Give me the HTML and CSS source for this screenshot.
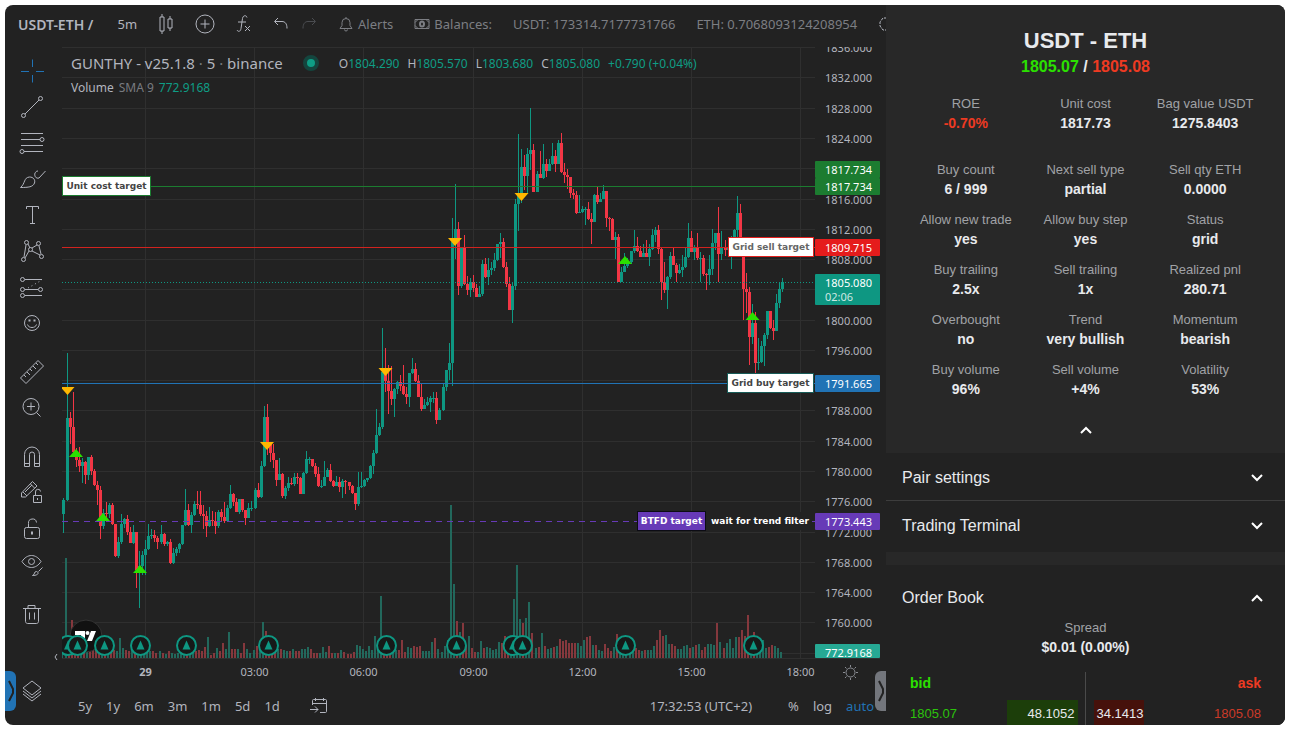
FILE: index.html
```html
<!DOCTYPE html>
<html lang="en">
<head>
  <meta charset="UTF-8" />
  <meta name="viewport" content="width=device-width, initial-scale=1.0"/>
  <title>USDT-ETH</title>
  <link rel="stylesheet" href="styles.css">
</head>
<body>
  <div class="app">
    <main class="terminal">
      <header class="topbar">
        <button class="pair">USDT-ETH /</button>
        <button>5m</button>
        <button aria-label="Candles"><svg width="16" height="22" viewBox="0 0 16 22"><path d="M4 1v3M4 18v3M12 3v3M12 15v3M2 4h4v14H2zM10 6h4v9h-4z"/></svg></button>
        <button aria-label="Compare"><svg width="20" height="20" viewBox="0 0 20 20"><circle cx="10" cy="10" r="9"/><path d="M10 5.500v9M5.500 10h9"/></svg></button>
        <button aria-label="Indicators"><svg width="16" height="20" viewBox="0 0 16 20"><path d="M11 3.500C10.500 1 7 1 6.500 4.500L5 14.500C4.500 18 2 18 1 16M2 8h8M9 12l5 5M14 12l-5 5"/></svg></button>
        <button aria-label="Undo"><svg width="16" height="14" viewBox="0 0 16 14"><path d="M5 1 1.500 4.500 5 8M2 4.500h7c3 0 5 2 5 7"/></svg></button>
        <button class="redo" aria-label="Redo"><svg width="16" height="14" viewBox="0 0 16 14"><path d="M11 1l3.500 3.500L11 8M14 4.500H7c-3 0-5 2-5 7"/></svg></button>
        <button class="dim"><svg width="16" height="16" viewBox="0 0 16 16"><path d="M2 12.500h12l-2-3V6.500a4 4 0 0 0-8 0v3zM6.500 13.500a1.500 1.500 0 0 0 3 0M8 1v1.500"/></svg>Alerts</button>
        <button class="dim"><svg width="16" height="12" viewBox="0 0 16 12"><path d="M1 1.500h14v9H1zM4 1.500 1 4.500M12 1.500 15 4.500M1 7.500l3 3M15 7.500l-3 3"/><ellipse cx="8" cy="6" rx="2" ry="2.500" stroke-width="2"/></svg>Balances:</button>
        <span class="dim">USDT: 173314.7177731766</span>
        <span class="dim">ETH: 0.7068093124208954</span>
        <button aria-label="Settings"><svg width="18" height="18" viewBox="0 0 18 18"><path d="M5 3 2 7v4l3 4h8l3-4V7l-3-4z" stroke-dasharray="3 1"/></svg></button>
      </header>

      <nav class="tools">
        <button class="active" aria-label="Cross"><svg viewBox="0 0 28 28"><path d="M14.500 2.500V10M14.500 18v7.500M3 14.500h8M18 14.500h8"/></svg></button>
        <button aria-label="Trend line"><svg viewBox="0 0 28 28"><circle cx="5.500" cy="22.500" r="2"/><circle cx="22.500" cy="5.500" r="2"/><path d="M7 21 21 7"/></svg></button>
        <button aria-label="Fib retracement"><svg viewBox="0 0 28 28"><path d="M3 4.500h22M3 10.500h19M3 16.500h22M6 22.500h19"/><circle cx="24" cy="10.500" r="2"/><circle cx="4" cy="22.500" r="2"/></svg></button>
        <button aria-label="Brush"><svg viewBox="0 0 28 28"><path d="M2.500 22.500c5-4 3-10 9-10.500 4 0 6 3 5 6-1.500 4-6 4.500-14 4.500zM17 8c-1 3 1 6 4 5l6.500-7M17 8c1-1 1-2 3-2"/></svg></button>
        <button aria-label="Text"><svg viewBox="0 0 28 28"><path d="M8.500 8V5.500h12V8M14.500 5.500v17M12 22.500h5"/></svg></button>
        <button aria-label="Patterns"><svg viewBox="0 0 28 28"><circle cx="8.500" cy="5.500" r="2"/><circle cx="20.500" cy="6.500" r="2"/><circle cx="12.500" cy="12.500" r="2"/><circle cx="5.500" cy="22.500" r="2"/><circle cx="23.500" cy="19.500" r="2"/><path d="m8 8-2 12M10 7l2 4M19 8l-5 3M14 14l8 4M21 9l2 8M11 14l-4 7"/></svg></button>
        <button aria-label="Forecast"><svg viewBox="0 0 28 28"><circle cx="4.500" cy="6.500" r="2"/><circle cx="4.500" cy="16.500" r="2"/><circle cx="22.500" cy="16.500" r="2"/><circle cx="4.500" cy="22.500" r="2"/><path d="M7 6.500h17M7 16.500h13M7 22.500h17"/><path d="m10 15 14-8" stroke-dasharray="1 3"/></svg></button>
        <button aria-label="Emoji"><svg viewBox="0 0 28 28"><circle cx="14" cy="14" r="7.500"/><path d="M9.500 15.500c1 4 8 4 9 0"/><path d="M11.500 10.500v2M16.500 10.500v2" stroke-width="2"/></svg></button>
        <button class="gap" aria-label="Measure"><svg viewBox="0 0 28 28"><path d="M2.500 20 20 2.500l5.500 5.500L8 25.500zM6 17l2 2M9 14l3 3M12 11l2 2M15 8l3 3M18 5l2 2"/></svg></button>
        <button aria-label="Zoom in"><svg viewBox="0 0 28 28"><circle cx="13" cy="12.500" r="8"/><path d="M13 8.500v8M9 12.500h8M18.500 18.500l4 4"/></svg></button>
        <button class="gap" aria-label="Magnet"><svg viewBox="0 0 28 28"><path d="M6.500 23.500v-12a7.500 7.500 0 0 1 15 0v12h-5v-12a2.500 2.500 0 0 0-5 0v12zM6.500 20.500h5M16.500 20.500h5"/></svg></button>
        <button aria-label="Stay in drawing mode"><svg viewBox="0 0 28 28"><path d="M3.500 18v-4L14.500 2.500l4.500 4.500L7.500 18zM5 13l4 4M12.500 5l4 4M7 13l7-7M15.500 16.500h8v7h-8zM17.500 16v-3a2.500 2.500 0 0 1 5-.5M19.500 19v2"/></svg></button>
        <button aria-label="Lock"><svg viewBox="0 0 28 28"><rect x="6.500" y="12.500" width="15" height="11" rx="2"/><path d="M10.500 12V8.500a4 4 0 0 1 8-1"/><path d="M14 16.500v3" stroke-width="2"/></svg></button>
        <button aria-label="Hide"><svg viewBox="0 0 28 28"><path d="M4 10.500c5-8 14-8 19 0-5 8-14 8-19 0z"/><circle cx="13.500" cy="10.500" r="3"/><path d="M14.500 24.500c3-1 1-4 4-4 3 1 2 4-4 4zM20.500 20.500l4-4"/></svg></button>
        <button class="gap" aria-label="Remove"><svg viewBox="0 0 28 28"><path d="M5 8.500h18M10 8V5.500h7V8M7.500 9v12.500c0 1 1 2 2 2h9c1 0 2-1 2-2V9M11.500 12.500v7M16.500 12.500v7"/></svg></button>
        <button class="layers" aria-label="Object tree"><svg viewBox="0 0 28 28"><path d="m14 4 9 7-9 7-9-7zM5 14l9 7 9-7M5 17l9 7 9-7"/></svg></button>
      </nav>

      <section class="chart">
        <div class="legend">
          <div class="legend-row">
            <span class="legend-title">GUNTHY - v25.1.8 <i>·</i> 5 <i>·</i> binance</span>
            <span class="status"></span>
            <span class="ohlc">O<b>1804.290</b></span>
            <span class="ohlc">H<b>1805.570</b></span>
            <span class="ohlc">L<b>1803.680</b></span>
            <span class="ohlc">C<b>1805.080</b></span>
            <span class="ohlc"><b>+0.790 (+0.04%)</b></span>
          </div>
          <div class="legend-row volume">Volume <i>SMA 9</i> <b>772.9168</b></div>
        </div>
        <svg id="plot" viewBox="62 47 818 640" preserveAspectRatio="xMaxYMin meet"></svg>
      </section>

      <footer class="ranges">
        <button>5y</button>
        <button>1y</button>
        <button>6m</button>
        <button>3m</button>
        <button>1m</button>
        <button>5d</button>
        <button>1d</button>
        <button class="goto" aria-label="Go to date"><svg width="18" height="18" viewBox="0 0 18 18"><path d="M2.500 8V3.500c0-.6.400-1 1-1h12c.6 0 1 .4 1 1v11c0 .6-.4 1-1 1H10M2.500 6.500h14M5.500 1v3M13.500 1v3M0 12.500h8M5 9.500l3 3-3 3"/></svg></button>
        <span class="clock">17:32:53 (UTC+2)</span>
        <button class="scale">%</button>
        <button>log</button>
        <button class="auto">auto</button>
      </footer>
      <button class="handle handle-left" aria-label="Open left panel"><svg width="8" height="24" viewBox="0 0 8 24"><path d="M2 2l4 8v4l-4 8"/></svg></button>
      <button class="handle handle-right" aria-label="Close right panel"><svg width="8" height="24" viewBox="0 0 8 24"><path d="M2 2l4 8v4l-4 8"/></svg></button>
      <button class="scroll-back" aria-label="Scroll back"><svg width="4" height="8" viewBox="0 0 4 8"><path d="M3 1 1 4l2 3"/></svg></button>
    </main>

    <aside class="side">
      <section class="summary">
        <h1>USDT - ETH</h1>
        <p class="quote"><span class="up">1805.07</span> / <span class="down">1805.08</span></p>
        <dl class="stats first">
          <div><dt>ROE</dt><dd class="down">-0.70%</dd></div>
          <div><dt>Unit cost</dt><dd>1817.73</dd></div>
          <div><dt>Bag value USDT</dt><dd>1275.8403</dd></div>
        </dl>
        <dl class="stats">
          <div><dt>Buy count</dt><dd>6 / 999</dd></div>
          <div><dt>Next sell type</dt><dd>partial</dd></div>
          <div><dt>Sell qty ETH</dt><dd>0.0000</dd></div>
          <div><dt>Allow new trade</dt><dd>yes</dd></div>
          <div><dt>Allow buy step</dt><dd>yes</dd></div>
          <div><dt>Status</dt><dd>grid</dd></div>
          <div><dt>Buy trailing</dt><dd>2.5x</dd></div>
          <div><dt>Sell trailing</dt><dd>1x</dd></div>
          <div><dt>Realized pnl</dt><dd>280.71</dd></div>
          <div><dt>Overbought</dt><dd>no</dd></div>
          <div><dt>Trend</dt><dd>very bullish</dd></div>
          <div><dt>Momentum</dt><dd>bearish</dd></div>
          <div><dt>Buy volume</dt><dd>96%</dd></div>
          <div><dt>Sell volume</dt><dd>+4%</dd></div>
          <div><dt>Volatility</dt><dd>53%</dd></div>
        </dl>
        <button class="collapse" aria-label="Collapse"><svg class="chevron" viewBox="0 0 12 8"><path d="M1 7l5-5 5 5"/></svg></button>
      </section>

      <button class="panel-head">Pair settings<svg class="chevron" viewBox="0 0 12 8"><path d="M1 1l5 5 5-5"/></svg></button>
      <button class="panel-head terminal-head">Trading Terminal<svg class="chevron" viewBox="0 0 12 8"><path d="M1 1l5 5 5-5"/></svg></button>

      <section class="book">
        <button class="panel-head book-head">Order Book<svg class="chevron" viewBox="0 0 12 8"><path d="M1 7l5-5 5 5"/></svg></button>
        <dl class="spread"><dt>Spread</dt><dd>$0.01 (0.00%)</dd></dl>
        <div class="sides">
          <table class="bids">
            <tr><th class="up">bid</th><th></th></tr>
            <tr><td class="up">1805.07</td><td class="qty">48.1052</td></tr>
          </table>
          <table class="asks">
            <tr><th></th><th class="down">ask</th></tr>
            <tr><td class="qty">34.1413</td><td class="down">1805.08</td></tr>
          </table>
        </div>
      </section>
    </aside>
  </div>

  <script src="chart.js"></script>
</body>
</html>
```
FILE: styles.css
```css
* {
  box-sizing: border-box;
}

body {
  margin: 0;
  padding: 5px;
  background: #ffffff;
  font-family: "Liberation Sans", Arial, sans-serif;
}

button {
  display: flex;
  align-items: center;
  margin: 0;
  padding: 0;
  border: none;
  background: none;
  color: inherit;
  font: inherit;
  cursor: pointer;
}

svg {
  display: block;
  flex: none;
}

p, h1, dl, dd {
  margin: 0;
}

i {
  font-style: normal;
  color: #787b80;
}

.app {
  display: flex;
  height: calc(100vh - 10px);
  border-radius: 8px;
  overflow: hidden;
  background: #222222;
}

/* trading view */
.terminal {
  position: relative;
  flex: 1;
  min-width: 0;
  display: grid;
  grid-template-columns: 57px minmax(0, 1fr);
  grid-template-rows: 42px minmax(0, 1fr) 38px;
  color: #b2b5be;
  font-family: "Noto Sans", sans-serif;
  font-size: 13px;
  overflow: hidden;
}

.terminal button svg {
  fill: none;
  stroke: currentColor;
}

.topbar {
  grid-column: 1 / 3;
  display: flex;
  align-items: center;
  gap: 21px;
  padding: 0 0 4px 13px;
  white-space: nowrap;
  overflow: hidden;
}

.topbar button {
  flex: none;
  gap: 4px;
}

.topbar .pair {
  margin-right: 3px;
  font-size: 14px;
  font-weight: 600;
}

.topbar .redo {
  margin-left: -9px;
  color: #4a4c50;
}

.dim {
  color: #7c7e83;
}

.tools {
  grid-row: 2 / 4;
  display: flex;
  flex-direction: column;
  align-items: center;
  padding: 6px 3px 16px 0;
}

.tools button {
  height: 36px;
}

.tools svg {
  width: 28px;
  height: 28px;
}

.tools .gap {
  margin-top: 13px;
}

.tools .layers {
  margin-top: auto;
}

.active, .auto {
  color: #2173b5;
}

.chart {
  position: relative;
  padding-right: 6px;
}

#plot {
  width: 100%;
  height: 100%;
  overflow: hidden;
}

.legend {
  position: absolute;
  left: 9px;
  top: 4px;
}

.legend-row {
  display: flex;
  align-items: center;
  gap: 8px;
  height: 24px;
  font-size: 12px;
  white-space: nowrap;
}

.volume {
  gap: 5px;
}

.legend-row b {
  color: #0f9d85;
  font-weight: 400;
}

.legend-title {
  font-size: 15px;
}

.status {
  width: 16px;
  height: 16px;
  margin: 0 12px;
  border: 4px solid #14453e;
  border-radius: 50%;
  background: #0f9d85;
}

.ranges {
  grid-column: 2;
  display: flex;
  align-items: center;
  gap: 14px;
  padding: 0 12px 0 16px;
}

.goto {
  margin-left: 16px;
}

.clock {
  margin-left: auto;
}

.scale {
  margin-left: 22px;
}

.handle {
  position: absolute;
  bottom: 14px;
  width: 11px;
  height: 40px;
  justify-content: center;
  color: #222222;
}

.terminal .handle svg {
  stroke-width: 2;
}

.handle-left {
  left: 0;
  border-radius: 0 6px 6px 0;
  background: #2173b5;
}

.handle-right {
  right: 0;
  border-radius: 6px 0 0 6px;
  background: #73767c;
}

.scroll-back {
  position: absolute;
  left: 49px;
  bottom: 64px;
}

/* chart drawing */
.grid {
  stroke: #2f2f2f;
}

.up-bar {
  fill: #0e9782;
}

.down-bar {
  fill: #f23645;
}

.up-volume {
  fill: #22685c;
}

.down-volume {
  fill: #85383d;
}

.sell {
  fill: #ffb700;
}

.buy {
  fill: #2be000;
}

.event {
  fill: #161a19;
  stroke: #0e9782;
  stroke-width: 2;
}

.axis {
  fill: #b2b5be;
  font-size: 11px;
}

.tag {
  fill: #ffffff;
  font-size: 11px;
}

.note {
  font-family: "DejaVu Sans", sans-serif;
  font-size: 9px;
  font-weight: 700;
}

.backdrop {
  fill: #222222;
}

.thin {
  fill: none;
  stroke: #8a8d93;
}

/* side panel */
.side {
  flex: 0 0 399px;
  background: #282828;
  color: #e8eaed;
  overflow: hidden;
}

.summary {
  display: flex;
  flex-direction: column;
  align-items: center;
  padding: 22px 20px 19px;
}

h1 {
  font-size: 22px;
  line-height: 28px;
}

.quote {
  font-size: 16px;
  font-weight: 700;
  line-height: 23px;
}

.up {
  color: #2be000;
}

.down {
  color: #ee3a22;
}

.stats {
  width: 100%;
  display: grid;
  grid-template-columns: repeat(3, 1fr);
  row-gap: 11px;
  text-align: center;
}

.stats.first {
  margin: 16px 0 27px;
}

dt {
  font-size: 13px;
  line-height: 20px;
  color: #a0a2a6;
}

dd {
  font-size: 14px;
  font-weight: 700;
  line-height: 19px;
}

.collapse {
  padding-top: 27px;
}

.chevron {
  width: 12px;
  height: 8px;
  fill: none;
  stroke: #ffffff;
  stroke-width: 2;
}

.panel-head {
  width: 100%;
  height: 47px;
  justify-content: space-between;
  padding: 3px 22px 0 16px;
  background: #222222;
  font-size: 16px;
}

.terminal-head {
  height: 52px;
  padding-bottom: 4px;
  border-top: 1px solid #3d3d3d;
}

.book {
  margin-top: 13px;
  padding-top: 9px;
  background: #222222;
}

.book-head {
  height: 44px;
}

.spread {
  text-align: center;
}

.sides {
  display: grid;
  grid-template-columns: 1fr 1fr;
  gap: 16px;
  margin-top: 15px;
  padding: 0 24px;
  background: linear-gradient(#4a4a4a, #4a4a4a) center / 1px 100% no-repeat;
}

table {
  border-collapse: collapse;
  font-size: 13px;
}

th {
  height: 22px;
  padding: 0;
  font-size: 14px;
  text-align: left;
}

td {
  height: 31px;
  padding: 8px 0 0;
}

td.up {
  color: #2cc30c;
}

td.down {
  color: #cc3a28;
}

.asks .down {
  text-align: right;
}

.bids .qty {
  width: 71px;
  padding-right: 3px;
  text-align: right;
  background: linear-gradient(#1c3e0a, #1c3e0a) bottom / 100% 25px no-repeat;
}

.asks .qty {
  width: 50px;
  padding-left: 3px;
  background: linear-gradient(#46110b, #46110b) left bottom / 50px 25px no-repeat;
}
```
FILE: chart.js
```js
const plot = document.getElementById("plot");
let out = "";

const priceY = p => 78.4 + (1832 - p) * 7.57;
const barX = i => Math.floor(67 + (i - 1) * 3.0323);

// [high, close, low] of every bar on the pixel scale, a bar opens at the last close
const bars = [
  [498,500,533],[353,418,501],[412,427,444],[392,452,455],[448,460,467],[447,466,472],[458,462,483],[461,475,484],
  [457,457,480],[455,471,475],[469,485,486],[481,490,505],[486,526,539],[509,513,529],[502,514,520],[503,505,518],
  [503,524,525],[524,556,557],[537,542,558],[514,524,544],[518,519,528],[515,532,535],[527,543,543],[525,532,544],
  [532,570,588],[551,566,608],[551,555,575],[540,549,575],[524,536,550],[529,535,539],[530,538,542],[536,542,549],
  [525,534,544],[533,544,546],[541,542,546],[539,563,564],[548,553,564],[547,549,556],[543,544,553],[525,525,545],
  [489,510,526],[504,525,526],[512,515,533],[501,504,516],[491,505,509],[491,514,516],[505,516,529],[511,526,537],
  [507,520,527],[511,521,526],[512,526,534],[510,512,528],[509,517,522],[502,521,523],[505,508,522],[485,494,509],
  [493,502,506],[498,512,512],[499,499,514],[499,510,512],[510,518,525],[503,508,518],[501,508,511],[488,490,509],
  [483,497,498],[461,466,498],[406,417,467],[404,443,455],[442,453,462],[444,460,468],[460,480,486],[458,474,480],
  [473,496,498],[486,488,499],[477,483,491],[478,484,485],[473,477,486],[473,478,484],[477,494,494],[472,473,494],
  [451,459,474],[457,459,464],[459,466,467],[463,474,477],[467,486,487],[480,486,488],[461,477,486],[468,470,477],
  [464,481,482],[480,486,487],[476,482,486],[477,487,492],[479,481,498],[480,482,494],[482,486,490],[485,493,494],
  [493,504,510],[472,487,506],[472,486,488],[479,480,487],[478,478,482],[465,466,479],[450,453,474],[409,435,454],
  [423,427,436],[328,372,429],[348,381,392],[365,391,414],[366,399,405],[388,389,417],[381,382,394],[375,386,391],
  [365,394,395],[387,397,404],[373,373,407],[358,369,374],[363,381,382],[375,397,397],[384,409,411],[399,405,409],
  [397,402,406],[396,398,412],[392,398,403],[392,420,424],[408,410,420],[384,387,411],[370,370,391],[343,363,380],
  [218,242,386],[184,229,259],[222,286,295],[247,247,288],[235,284,285],[276,290,295],[278,282,297],[275,288,292],
  [284,297,297],[286,294,297],[260,264,296],[258,277,278],[258,270,285],[262,268,275],[253,260,271],[244,244,261],
  [233,242,258],[238,267,268],[262,284,287],[277,310,310],[282,286,323],[199,204,290],[134,196,231],[149,167,203],
  [155,176,190],[148,154,193],[108,150,170],[144,192,192],[171,174,192],[151,178,178],[144,164,179],[159,171,177],
  [159,164,171],[143,156,165],[150,164,172],[140,143,164],[133,172,173],[163,175,183],[169,177,189],[177,193,198],
  [189,195,199],[191,213,214],[195,212,213],[206,209,213],[207,209,225],[202,219,220],[213,222,244],[194,195,222],
  [187,202,204],[193,199,202],[185,191,199],[191,218,227],[217,219,231],[218,240,240],[232,237,259],[234,282,282],
  [267,272,282],[253,266,272],[258,262,268],[251,251,264],[230,246,253],[237,251,252],[246,257,257],[244,253,257],
  [240,257,257],[244,249,266],[229,235,250],[227,230,242],[225,249,254],[247,282,300],[262,290,293],[276,277,309],
  [252,256,279],[247,265,265],[263,273,282],[264,270,274],[255,267,277],[248,257,268],[223,238,258],[231,252,252],
  [245,248,260],[233,258,260],[252,258,282],[255,274,276],[273,275,290],[255,269,285],[229,243,275],[233,233,250],
  [207,254,282],[231,247,260],[240,250,256],[240,247,256],[236,238,269],[229,230,250],[196,213,237],[204,240,245],
  [240,289,320],[273,292,313],[287,337,365],[304,323,344],[312,363,374],[338,362,370],[341,346,363],[333,335,366],
  [311,311,339],[311,328,329],[320,331,340],[294,303,331],[282,289,308],[278,282,292]
];

const volumes = [
  12,100,20,38,22,12,10,14,20,10,14,10,8,7,12,9,11,8,7,20,10,8,7,12,10,20,12,10,8,7,7,5,7,5,4,7,5,4,5,7,
  12,10,8,9,7,8,7,11,21,3,5,10,7,15,9,26,9,9,9,5,15,9,5,8,12,10,36,27,14,10,12,9,9,8,7,7,9,7,7,9,
  9,11,9,5,5,5,11,6,12,5,5,5,8,6,4,4,6,13,12,9,7,12,8,22,14,62,15,12,10,8,8,8,18,6,11,10,12,11,12,7,
  7,7,16,20,9,6,12,18,153,74,37,26,35,12,22,10,6,6,17,10,11,10,8,9,16,15,22,19,15,59,93,39,35,40,56,25,10,11,25,12,
  9,10,11,12,19,17,18,15,15,15,15,12,18,21,22,13,13,8,7,14,10,7,11,24,20,14,12,10,10,10,8,7,8,8,8,12,18,28,22,23,
  14,14,12,9,9,12,13,10,11,13,14,8,11,14,14,13,35,16,10,15,19,10,21,21,28,22,43,20,26,20,18,18,10,11,13,12,10,6
];

const rect = (cls, x, y, w, h) => `<rect class="${cls}" x="${x}" y="${y}" width="${w}" height="${h}"/>`;

// grid, prices that sit fully behind a tag get no label
const covered = [1756, 1792, 1804, 1820];
for (let p = 1756; p <= 1836; p += 4) {
  const y = Math.round(priceY(p)) - 0.5;
  out += `<path class="grid" d="M62 ${y}H815"/>`;
  if (!covered.includes(p)) {
    out += `<text class="axis" x="825" y="${y + 4}">${p}.000</text>`;
  }
}
["29", "03:00", "06:00", "09:00", "12:00", "15:00", "18:00"].forEach((t, i) => {
  const x = 145.5 + Math.round(i * 109.2);
  out += `<path class="grid" d="M${x} 47V658"/>`;
  out += `<text class="axis" x="${x}" y="676" text-anchor="middle"${i ? "" : ' font-weight="700"'}>${t}</text>`;
});

// volume and candles
let open = 514;
let candles = "";
bars.forEach(([high, close, low], i) => {
  const dir = close <= open ? "up" : "down";
  const x = barX(i);
  out += rect(dir + "-volume", x - 2, 658 - volumes[i], 2, volumes[i]);
  candles += rect(dir + "-bar", x, high, 1, low - high);
  candles += rect(dir + "-bar", x - 1, Math.min(open, close), 3, Math.max(1, Math.abs(open - close)));
  open = close;
});
out += candles;

// targets
out += `<path d="M62 186.500H815" stroke="#1c7c30"/>
<path d="M62 247.500H815" stroke="#d3231f"/>
<path d="M62 282.500H815" stroke="#0e9782" stroke-dasharray="1 2"/>
<path d="M62 383.500H815" stroke="#2173b5"/>
<path d="M62 521.500H815" stroke="#673ab7" stroke-dasharray="6 5"/>`;

// logo
out += `<circle cx="86" cy="636" r="16" fill="#111" stroke="#333"/>
<path d="M75 631h10v9h-4v-5h-6zM91 631h5l-4 10h-5z" fill="#fff"/><circle cx="87.500" cy="633" r="2" fill="#fff"/>`;

[[67.5, 390], [267, 445], [385.5, 371], [455, 241], [521.5, 196]].forEach(([x, y]) => {
  out += `<path class="sell" d="M${x - 7} ${y - 3}h14l-7 8z"/>`;
});
[[76, 454], [103, 518], [140, 570], [625, 261], [752.5, 317]].forEach(([x, y]) => {
  out += `<path class="buy" d="M${x - 7} ${y + 3}h14l-7 -8z"/>`;
});
[68, 77.5, 104.5, 140.5, 186.5, 268.5, 386.5, 456.5, 513, 522.5, 625.5, 753.5].forEach(x => {
  out += `<circle class="event" cx="${x}" cy="645.5" r="9.5"/><path class="up-bar" d="M${x - 4} 649.500h8l-4 -9z"/>`;
});

const note = (x, y, w, text, fill, stroke, color) => {
  out += `<rect x="${x}" y="${y}" width="${w}" height="19" fill="${fill}" stroke="${stroke}"/>`;
  out += `<text class="note" x="${x + w / 2}" y="${y + 12}" text-anchor="middle" fill="${color}">${text}</text>`;
};
note(62.5, 176.5, 88, "Unit cost target", "#fff", "#1c7c30", "#444");
note(728.5, 237.5, 85, "Grid sell target", "#fff", "#e2201e", "#666");
note(727.5, 373.5, 86, "Grid buy target", "#fff", "#175b57", "#444");
note(637.5, 511.5, 68, "BTFD target", "#673ab7", "#0c0c14", "#fff");
out += rect("backdrop", 708, 512, 104, 18);
out += `<text class="note" x="711" y="524" fill="#fff">wait for trend filter</text>`;

// axis tags
const tag = (y, h, text, fill) => {
  out += `<rect x="815" y="${y}" width="65" height="${h}" rx="1" fill="${fill}"/>`;
  out += `<text class="tag" x="825" y="${y + 13}">${text}</text>`;
};
tag(161, 17, "1817.734", "#1c7c30");
tag(178, 17, "1817.734", "#1c7c30");
tag(239, 17, "1809.715", "#e51c1c");
tag(274, 31, "1805.080", "#0e9782");
out += `<text class="tag" x="825" y="301" fill-opacity=".8">02:06</text>`;
tag(375, 17, "1791.665", "#2173b5");
tag(513, 17, "1773.443", "#673ab7");
tag(644, 14, "772.9168", "#26a994");

out += `<path class="grid" d="M62 658.500H880"/>
<circle class="thin" cx="850.500" cy="672.500" r="4.500"/>
<path class="thin" d="M850.500 665v2M850.500 678v2M843 672.500h2M856 672.500h2M845 667l1.500 1.500M854.500 676.500l1.500 1.500M856 667l-1.500 1.500M846.500 676.500l-1.500 1.500"/>`;

plot.innerHTML = out;
```
